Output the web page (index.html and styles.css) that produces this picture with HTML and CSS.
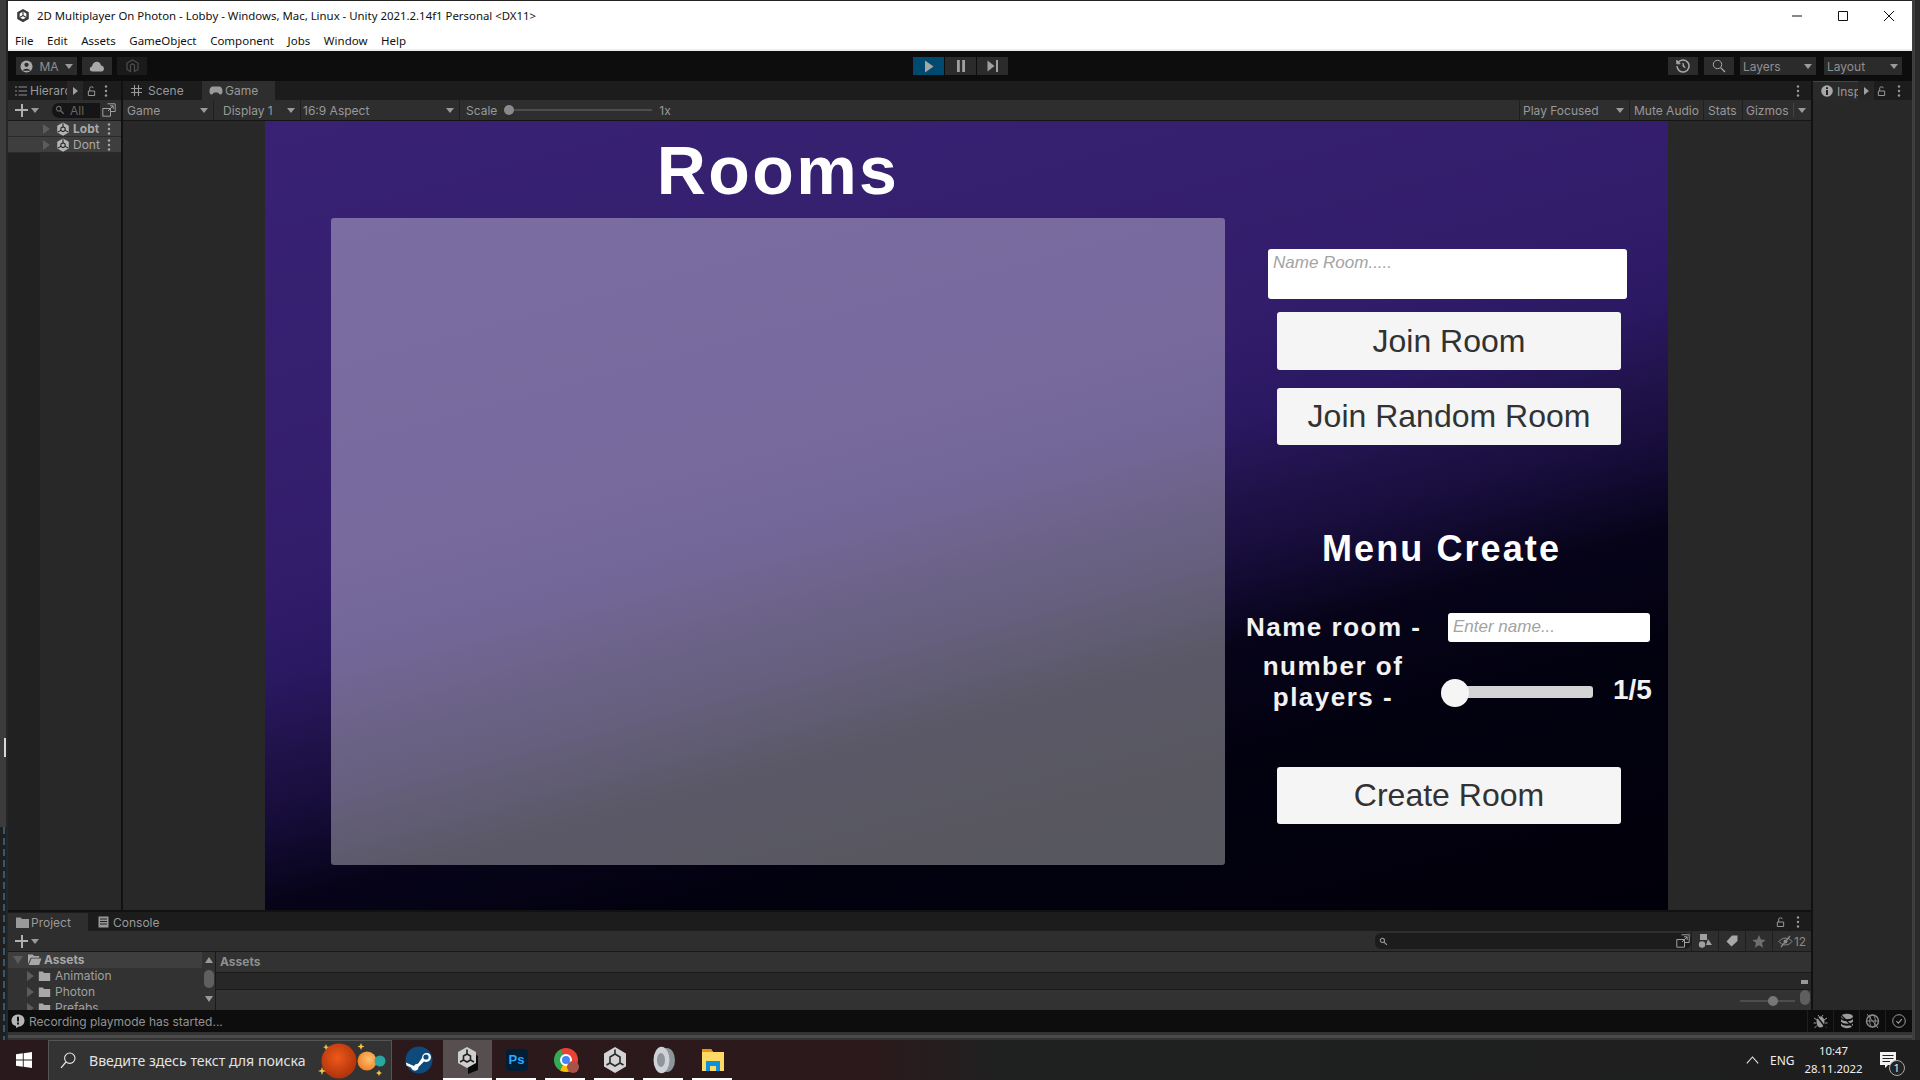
FILE: index.html
```html
<!DOCTYPE html>
<html lang="en">

<head>
  <meta charset="UTF-8">
  <title>2D Multiplayer On Photon - Lobby - Unity</title>
  <link rel="stylesheet" href="styles.css">
</head>

<body>
  <svg class="defs" width="0" height="0">
    <symbol id="i-unity" viewBox="0 0 16 16">
      <path d="M8 0.5 14.6 4.3V11.9L8 15.7 1.4 11.9V4.3Z" fill="currentColor"/>
      <path d="M8 5.4 10.4 6.8V9.6L8 11 5.6 9.6V6.8Z M8 1.4V5.4 M2 11.6 5.6 9.6 M14 11.6 10.4 9.6" fill="none" stroke="#1c1c1c" stroke-width="1.2"/>
    </symbol>
    <symbol id="i-folder" viewBox="0 0 16 14">
      <path d="M1 1.5H6L7.5 3.2H15V13H1Z" fill="currentColor"/>
    </symbol>
    <symbol id="i-folder-open" viewBox="0 0 16 14">
      <path d="M1 1.5H6L7.5 3.2H13V5H4L1 12Z M4.8 6H15.5L13 13H1.8Z" fill="currentColor"/>
    </symbol>
    <symbol id="i-lock" viewBox="0 0 10 12">
      <path d="M1.5 6H8.5V11H1.5Z M3 6V2.8C3 0.8 7 0.8 7 2.8" fill="none" stroke="currentColor" stroke-width="1.1"/>
    </symbol>
    <symbol id="i-dots" viewBox="0 0 4 12">
      <circle cx="2" cy="1.5" r="1.2" fill="currentColor"/>
      <circle cx="2" cy="6" r="1.2" fill="currentColor"/>
      <circle cx="2" cy="10.5" r="1.2" fill="currentColor"/>
    </symbol>
    <symbol id="i-link" viewBox="0 0 14 14">
      <path d="M5.5 0.8H13.2V8.5H9 M0.8 5.5H8.5V13.2H0.8Z M6 8 11 3 M8 2.8H11.2V6" fill="none" stroke="currentColor"/>
    </symbol>
    <symbol id="i-lens" viewBox="0 0 12 12">
      <circle cx="4.5" cy="4.5" r="2.8" fill="none" stroke="currentColor" stroke-width="1.4"/>
      <path d="M6.8 6.8 10.5 10.5" stroke="currentColor" stroke-width="1.6"/>
    </symbol>
  </svg>

  <div class="desktop">
    <div class="edge-left">
      <div class="edge-mark"></div>
      <div class="edge-code"></div>
    </div>

    <div class="window">
      <header class="titlebar">
        <svg class="app-icon" width="14" height="15" viewBox="0 0 16 16">
          <path d="M8 0.5 14.6 4.3V11.9L8 15.7 1.4 11.9V4.3Z" fill="#3a3a3a"/>
          <path d="M8 3.4 11.8 5.6V10.2L8 12.4 4.2 10.2V5.6Z" fill="#fff"/>
          <path d="M8 8V3.4M8 8 4.2 10.2M8 8 11.8 10.2" stroke="#3a3a3a" stroke-width="1.3"/>
        </svg>
        <span class="title-text">2D Multiplayer On Photon - Lobby - Windows, Mac, Linux - Unity 2021.2.14f1 Personal &lt;DX11&gt;</span>
        <div class="win-buttons">
          <svg width="12" height="12" viewBox="0 0 12 12"><path d="M1 6H11" stroke="#111" stroke-width="1"/></svg>
          <svg width="12" height="12" viewBox="0 0 12 12"><path d="M1.5 1.5H10.5V10.5H1.5Z" fill="none" stroke="#111"/></svg>
          <svg width="12" height="12" viewBox="0 0 12 12"><path d="M1 1 11 11M11 1 1 11" stroke="#111"/></svg>
        </div>
      </header>
      <nav class="menubar">
        <span>File</span><span>Edit</span><span>Assets</span><span>GameObject</span><span>Component</span><span>Jobs</span><span>Window</span><span>Help</span>
      </nav>

      <div class="toolbar">
        <div class="toolbar-left">
          <div class="tool-btn account">
            <svg width="13" height="13" viewBox="0 0 14 14"><circle cx="7" cy="7" r="6.5" fill="#a8a8a8"/><circle cx="7" cy="5.2" r="2.3" fill="#2b2b2b"/><path d="M2.8 11.6C4 8.6 10 8.6 11.2 11.6Z" fill="#2b2b2b"/></svg>
            <span>MA</span><i class="caret"></i>
          </div>
          <div class="tool-btn cloud">
            <svg width="16" height="11" viewBox="0 0 16 11"><path d="M3.5 10.5C0 10.5 0 6 3 5.6 3.4 2 6 0.5 8.4 0.8 10.8 1 11.8 3 12 4.6 15.8 4.8 16 10.5 12.5 10.5Z" fill="#a8a8a8"/></svg>
          </div>
          <div class="tool-btn collab">
            <svg width="13" height="15" viewBox="0 0 13 15"><path d="M6.5 1 12 4V10.5L8.5 12.5V6L6.5 4.8 4.5 6V12.5L1 10.5V4Z" fill="none" stroke="#4d4d4d" stroke-width="1.2"/></svg>
          </div>
        </div>
        <div class="play-group">
          <div class="play-btn active"><svg width="10" height="13" viewBox="0 0 10 13"><path d="M1 0.5 9.5 6.5 1 12.5Z" fill="#a6a6a6"/></svg></div>
          <div class="play-btn"><svg width="10" height="12" viewBox="0 0 10 12"><path d="M1 0H3.8V12H1ZM6.2 0H9V12H6.2Z" fill="#a0a0a0"/></svg></div>
          <div class="play-btn"><svg width="12" height="12" viewBox="0 0 12 12"><path d="M0.5 0.5 7.5 6 0.5 11.5Z M9 0H11V12H9Z" fill="#a0a0a0"/></svg></div>
        </div>
        <div class="toolbar-right">
          <div class="tool-btn square">
            <svg width="14" height="14" viewBox="0 0 14 14"><path d="M2.2 3.4A6 6 0 1 1 1 7" fill="none" stroke="#a8a8a8" stroke-width="1.5"/><path d="M0.8 1.2V4.8H4.2Z M7 3.8V7.4L9.4 8.8" fill="#a8a8a8" stroke="#a8a8a8"/></svg>
          </div>
          <div class="tool-btn square">
            <svg width="14" height="14" viewBox="0 0 14 14"><circle cx="5.5" cy="5.5" r="4.2" fill="none" stroke="#a8a8a8"/><path d="M8.6 8.6 13 13" stroke="#a8a8a8" stroke-width="1.3"/></svg>
          </div>
          <div class="tool-btn select layers"><span>Layers</span><i class="caret"></i></div>
          <div class="tool-btn select layout"><span>Layout</span><i class="caret"></i></div>
        </div>
      </div>

      <main class="docks">
        <div class="docks-left">
          <div class="docks-top">
            <section class="hierarchy">
              <div class="tabrow">
                <div class="hier-tab">
                  <svg width="12" height="10" viewBox="0 0 12 10"><path d="M3.5 1H12M3.5 5H12M3.5 9H12M0 1H2M0 5H2M0 9H2" stroke="#8f8f8f"/></svg>
                  <span>Hierarc</span>
                </div>
                <div class="tab-arrow"><i class="tri-right"></i></div>
                <svg class="tab-lock" width="9" height="12"><use href="#i-lock"/></svg>
                <svg class="tab-dots" width="4" height="12"><use href="#i-dots"/></svg>
              </div>
              <div class="hier-tools">
                <span class="plus"></span><i class="caret"></i>
                <div class="search-field">
                  <svg width="10" height="10"><use href="#i-lens"/></svg>
                  <span>All</span>
                </div>
                <div class="link-box"><svg width="14" height="14"><use href="#i-link"/></svg></div>
              </div>
              <div class="hier-row">
                <i class="tri-tree"></i>
                <svg width="14" height="14"><use href="#i-unity"/></svg>
                <b>Lobt</b>
                <svg class="row-dots" width="4" height="12"><use href="#i-dots"/></svg>
              </div>
              <div class="hier-row">
                <i class="tri-tree"></i>
                <svg width="14" height="14"><use href="#i-unity"/></svg>
                <span>Dont</span>
                <svg class="row-dots" width="4" height="12"><use href="#i-dots"/></svg>
              </div>
              <div class="hier-body"></div>
            </section>

            <section class="game-panel">
              <div class="tabrow game-tabs">
                <div class="tab scene-tab">
                  <svg width="11" height="11" viewBox="0 0 11 11"><path d="M3.5 0V11M7.5 0V11M0 3.5H11M0 7.5H11" stroke="#9a9a9a" stroke-width="1.1"/></svg>
                  <span>Scene</span>
                </div>
                <div class="tab game-tab">
                  <svg width="14" height="9" viewBox="0 0 14 9"><path d="M3.5 0.5H10.5C14 0.5 14.6 8.5 11.5 8.5 10 8.5 9.5 6.5 8.5 6.5H5.5C4.5 6.5 4 8.5 2.5 8.5-0.6 8.5 0 0.5 3.5 0.5Z" fill="#9a9a9a"/></svg>
                  <span>Game</span>
                </div>
                <svg class="game-dots" width="4" height="12"><use href="#i-dots"/></svg>
              </div>
              <div class="game-tools">
                <div class="gt gt-game"><span>Game</span><i class="caret"></i></div>
                <div class="gt gt-display"><span>Display 1</span><i class="caret"></i></div>
                <div class="gt gt-aspect"><span>16:9 Aspect</span><i class="caret"></i></div>
                <div class="gt gt-scale">
                  <span>Scale</span>
                  <div class="scale-line"><i class="scale-thumb"></i></div>
                  <span>1x</span>
                </div>
                <div class="gt gt-focus"><span>Play Focused</span><i class="caret"></i></div>
                <div class="gt gt-mute"><span>Mute Audio</span></div>
                <div class="gt gt-stats"><span>Stats</span></div>
                <div class="gt gt-gizmos"><span>Gizmos</span><i class="gizmo-sep"></i><i class="caret"></i></div>
              </div>
              <div class="game-view">
                <div class="game-canvas">
                  <div class="rooms-col">
                    <h1 class="rooms-title">Rooms</h1>
                    <div class="rooms-list"></div>
                  </div>
                  <div class="side-col">
                    <div class="input-box room-input">Name Room.....</div>
                    <div class="ui-btn join-btn">Join Room</div>
                    <div class="ui-btn random-btn">Join Random Room</div>
                    <h2 class="menu-title">Menu Create</h2>
                    <div class="form-row name-row">
                      <div class="form-label">Name room -</div>
                      <div class="input-box name-input">Enter name...</div>
                    </div>
                    <div class="form-row players-row">
                      <div class="form-label players-label">number of<br>players -</div>
                      <div class="slider"><i class="slider-thumb"></i></div>
                      <div class="slider-value">1/5</div>
                    </div>
                    <div class="ui-btn create-btn">Create Room</div>
                  </div>
                </div>
              </div>
            </section>
          </div>

          <section class="project">
            <div class="tabrow project-tabs">
              <div class="tab project-tab">
                <svg width="15" height="13"><use href="#i-folder"/></svg>
                <span>Project</span>
              </div>
              <div class="tab console-tab">
                <svg width="11" height="12" viewBox="0 0 11 12"><path d="M0.5 0.5H10.5V11.5H0.5Z" fill="#999"/><path d="M2 3H9M2 5.5H9M2 8H9" stroke="#1c1c1c"/></svg>
                <span>Console</span>
              </div>
              <svg class="project-lock" width="9" height="12"><use href="#i-lock"/></svg>
              <svg class="project-dots" width="4" height="12"><use href="#i-dots"/></svg>
            </div>
            <div class="project-tools">
              <span class="plus"></span><i class="caret"></i>
              <div class="project-search">
                <svg width="9" height="9"><use href="#i-lens"/></svg>
                <div class="link-box"><svg width="14" height="14"><use href="#i-link"/></svg></div>
              </div>
              <div class="pt-icon">
                <svg width="14" height="14" viewBox="0 0 14 14"><path d="M2 0H9V6H2Z" fill="#a0a0a0"/><circle cx="4" cy="10.5" r="3.2" fill="#a0a0a0"/><path d="M10 5 14 11H8Z" fill="#a0a0a0"/></svg>
              </div>
              <div class="pt-icon">
                <svg width="12" height="12" viewBox="0 0 12 12"><path d="M6 0.5H11.5V6L5.5 11.5 0.5 6.5Z" fill="#a8a8a8"/></svg>
              </div>
              <div class="pt-icon">
                <svg width="14" height="13" viewBox="0 0 14 13"><path d="M7 0 8.9 4.5 13.6 4.9 10 8 11.1 12.8 7 10.2 2.9 12.8 4 8 0.4 4.9 5.1 4.5Z" fill="#6f6f6f"/></svg>
              </div>
              <div class="pt-count">
                <svg width="15" height="13" viewBox="0 0 15 13"><path d="M1 6.5C4 2 11 2 14 6.5 11 11 4 11 1 6.5Z" fill="none" stroke="#8a8a8a"/><circle cx="7.5" cy="6.5" r="2" fill="#8a8a8a"/><path d="M3 12 12 1" stroke="#8a8a8a" stroke-width="1.2"/></svg>
                <span>12</span>
              </div>
            </div>
            <div class="project-body">
              <div class="tree">
                <div class="tree-list">
                  <div class="tree-root">
                    <i class="tri-open"></i>
                    <svg width="15" height="13"><use href="#i-folder-open"/></svg>
                    <b>Assets</b>
                  </div>
                  <div class="tree-item"><i class="tri-tree"></i><svg width="13" height="12"><use href="#i-folder"/></svg><span>Animation</span></div>
                  <div class="tree-item"><i class="tri-tree"></i><svg width="13" height="12"><use href="#i-folder"/></svg><span>Photon</span></div>
                  <div class="tree-item"><i class="tri-tree"></i><svg width="13" height="12"><use href="#i-folder"/></svg><span>Prefabs</span></div>
                </div>
                <div class="tree-scroll">
                  <i class="scroll-up"></i>
                  <i class="scroll-thumb"></i>
                  <i class="scroll-down"></i>
                </div>
              </div>
              <div class="files">
                <div class="crumbs"><b>Assets</b></div>
                <div class="files-list"><i class="files-pin"></i></div>
                <div class="files-foot">
                  <div class="zoom-line"><i class="zoom-thumb"></i></div>
                  <i class="files-knob"></i>
                </div>
              </div>
            </div>
          </section>
        </div>

        <aside class="inspector">
          <div class="tabrow">
            <div class="insp-tab">
              <svg width="12" height="12" viewBox="0 0 12 12"><circle cx="6" cy="6" r="5.8" fill="#a8a8a8"/><path d="M5 2.2H7V4H5ZM5 5H7V10H5Z" fill="#222"/></svg>
              <span>Insp</span>
            </div>
            <div class="tab-arrow"><i class="tri-right"></i></div>
            <svg class="tab-lock" width="9" height="12"><use href="#i-lock"/></svg>
            <svg class="tab-dots" width="4" height="12"><use href="#i-dots"/></svg>
          </div>
        </aside>
      </main>

      <footer class="statusbar">
        <svg width="14" height="14" viewBox="0 0 14 14"><path d="M7 0.5C11 0.5 13.5 3 13.5 6.5S11 12.5 8 12.5L5 14V12C2 11.5 0.5 9.5 0.5 6.5S3 0.5 7 0.5Z" fill="#b5b5b5"/><path d="M6 2.8H8V7.6H6ZM6 8.6H8V10.4H6Z" fill="#111"/></svg>
        <span class="status-text">Recording playmode has started...</span>
        <div class="status-icons">
          <div class="status-icon">
            <svg width="15" height="16" viewBox="0 0 15 16"><ellipse cx="7.5" cy="9" rx="4" ry="5.5" fill="#9c9c9c"/><path d="M1 5 4 7M14 5 11 7M0.5 10H3M14.5 10H12M1.5 15 4 12.5M13.5 15 11 12.5M5 2 6.5 4M10 2 8.5 4" stroke="#9c9c9c"/><path d="M2 1 13 15" stroke="#0d0d0d" stroke-width="1.4"/></svg>
          </div>
          <div class="status-icon">
            <svg width="14" height="16" viewBox="0 0 14 16"><ellipse cx="7" cy="3.5" rx="6" ry="2.8" fill="#9c9c9c"/><path d="M1 6C3 9 11 9 13 6V8.5C11 11.5 3 11.5 1 8.5ZM1 10.6C3 13.6 11 13.6 13 10.6V12.8C11 16 3 16 1 12.8Z" fill="#9c9c9c"/><path d="M1 2 13 14" stroke="#0d0d0d" stroke-width="1.2"/></svg>
          </div>
          <div class="status-icon">
            <svg width="15" height="16" viewBox="0 0 15 16"><circle cx="7.5" cy="8" r="6" fill="none" stroke="#8c8c8c" stroke-width="1.4"/><ellipse cx="7.5" cy="8" rx="2.8" ry="6" fill="none" stroke="#8c8c8c"/><path d="M1.5 8H13.5M2 1 13 15" stroke="#8c8c8c"/></svg>
          </div>
          <div class="status-icon">
            <svg width="14" height="14" viewBox="0 0 14 14"><circle cx="7" cy="7" r="6.3" fill="none" stroke="#9c9c9c"/><path d="M4.4 7.2 6.4 9.2 9.8 5.2" fill="none" stroke="#9c9c9c" stroke-width="1.2"/></svg>
          </div>
        </div>
      </footer>
      <div class="window-foot"></div>
    </div>

    <div class="edge-right"></div>
  </div>

  <div class="taskbar">
    <div class="start">
      <svg width="16" height="16" viewBox="0 0 16 16"><path d="M0 2.3 6.8 1.3V7.6H0ZM7.7 1.2 16 0V7.6H7.7ZM0 8.4H6.8V14.7L0 13.7ZM7.7 8.4H16V16L7.7 14.8Z" fill="#fff"/></svg>
    </div>
    <div class="task-search">
      <svg class="glass" width="16" height="17" viewBox="0 0 16 17"><circle cx="9.8" cy="6.2" r="5.2" fill="none" stroke="#e8e8e8" stroke-width="1.1"/><path d="M6 10 1 15.8" stroke="#e8e8e8" stroke-width="1.2"/></svg>
      <span class="search-text">Введите здесь текст для поиска</span>
      <svg class="planets" width="74" height="40" viewBox="0 0 74 40">
        <defs>
          <radialGradient id="p1" cx="0.45" cy="0.4" r="0.65"><stop offset="0" stop-color="#f0581a"/><stop offset="1" stop-color="#a8300a"/></radialGradient>
          <radialGradient id="p2" cx="0.6" cy="0.4" r="0.7"><stop offset="0" stop-color="#ffc070"/><stop offset="1" stop-color="#ee7b1e"/></radialGradient>
        </defs>
        <g transform="translate(6 0)">
          <circle cx="20" cy="20" r="17.5" fill="url(#p1)"/>
          <circle cx="48" cy="20" r="9.5" fill="url(#p2)"/>
          <circle cx="61" cy="20" r="5.5" fill="#2ba6a0"/>
          <path d="M7 3 8 5.4 10 6 8 7 7 9 6 7 4 6 6 5.4ZM42 2 43 4.4 45.5 5.5 43 6.6 42 9 41 6.6 38.5 5.5 41 4.4ZM3 26 4 29 7 30 4 31 3 34 2 31-1 30 2 29ZM60 29 61 31 63 32 61 33 60 35 59 33 57 32 59 31Z" fill="#f5c542"/>
        </g>
      </svg>
    </div>
    <div class="task-tile">
      <svg width="28" height="28" viewBox="0 0 28 28"><circle cx="14" cy="14" r="13.5" fill="#0f4a7c"/><path d="M0.8 16.5 9 20C10 18.4 11.5 17.6 13 17.8L17 12C17 8.5 20 6.5 22.5 7 25.5 7.6 26.5 10.5 25.6 13 24.6 15.5 21.5 16.5 19 15.5L13.5 21C13.6 24 10.5 25.6 8 24 6.8 23.3 6.6 22.5 6 21.5L1.5 19.5Z" fill="#fff"/><circle cx="21" cy="11" r="2.6" fill="#0f4a7c"/></svg>
    </div>
    <div class="task-tile on">
      <svg width="26" height="28" viewBox="0 0 26 28"><path d="M13 4 23 10V24L13 28Z" fill="#0a0a0a"/><path d="M12 1 21 6V17L12 22 3 17V6Z" fill="#cfcfcf"/><path d="M12 8 15.5 10V14L12 16 8.5 14V10Z M12 3.5V8M5 16 8.5 14M19 16 15.5 14" fill="none" stroke="#222" stroke-width="1.6"/></svg>
      <i class="run-mark wide"></i>
    </div>
    <div class="task-tile">
      <div class="ps-icon">Ps</div>
      <i class="run-mark"></i>
    </div>
    <div class="task-tile">
      <div class="chrome-icon"><i></i><i class="chrome-avatar"></i></div>
      <i class="run-mark"></i>
    </div>
    <div class="task-tile">
      <svg width="24" height="28" viewBox="0 0 24 28"><path d="M12 1 23 7.5V20.5L12 27 1 20.5V7.5Z" fill="#d4d4d4"/><path d="M12 8 17 11V17L12 20 7 17V11Z M12 3.5V8M3.5 19 7 17M20.5 19 17 17" fill="none" stroke="#2b2b2b" stroke-width="1.6"/></svg>
      <i class="run-mark"></i>
    </div>
    <div class="task-tile">
      <svg width="24" height="28" viewBox="0 0 24 28"><ellipse cx="15" cy="14" rx="8" ry="12" fill="#8d949a"/><ellipse cx="9.5" cy="14" rx="8" ry="13.2" fill="#cdd2d6"/><ellipse cx="9" cy="14" rx="4" ry="7" fill="#8e959b"/></svg>
      <i class="run-mark"></i>
    </div>
    <div class="task-tile">
      <svg width="24" height="24" viewBox="0 0 24 24"><path d="M1 1H10L12 4H23V23H1Z" fill="#ffd966"/><path d="M1 1H10L12 4H1Z" fill="#e8960c"/><path d="M5 13H19V23H15V18H9V23H5Z" fill="#0a92dc"/></svg>
      <i class="run-mark"></i>
    </div>
    <div class="tray">
      <svg width="13" height="8" viewBox="0 0 13 8"><path d="M0.8 7.3 6.5 1 12.2 7.3" fill="none" stroke="#e8e8e8" stroke-width="1.1"/></svg>
      <span class="lang">ENG</span>
      <div class="clock"><span>10:47</span><span>28.11.2022</span></div>
      <div class="notify">
        <svg width="18" height="19" viewBox="0 0 18 19"><path d="M1 1H17V14H9L6 17V14H1Z" fill="#f2f2f2"/><path d="M3.5 4.5H14.5M3.5 7.5H14.5M3.5 10.5H11" stroke="#222"/></svg>
        <span class="notify-badge">1</span>
      </div>
    </div>
  </div>
</body>

</html>
```

FILE: styles.css
```css
* {
  box-sizing: border-box;
}

html,
body {
  margin: 0;
  height: 1080px;
  overflow: hidden;
  background-color: #1c1c1c;
}

body {
  font-family: Inter, "Noto Sans", sans-serif;
  font-size: 12px;
  color: #999;
}

i {
  display: block;
}

svg {
  display: block;
  flex: none;
}

.defs {
  position: absolute;
}

.desktop {
  display: flex;
  height: 1040px;
}

/* screen edges around the editor */
.edge-left {
  width: 8px;
  display: flex;
  flex-direction: column;
  background-color: #3c3c3c;
  border-right: 2px solid #262626;
}

.edge-mark {
  width: 2px;
  height: 19px;
  margin: 738px 0 70px 4px;
  background-color: #d8d8d8;
}

.edge-code {
  flex: 1;
  background-color: #1f1f1f;
  background-image: repeating-linear-gradient(to bottom, #35586e 0, #35586e 7px, transparent 7px, transparent 11px);
  background-size: 2px 100%;
  background-position: 3px 0;
  background-repeat: no-repeat;
}

.edge-right {
  width: 8px;
  background-color: #3f3f3f;
  border-right: 5px solid #2b2b2b;
}

.window {
  width: 1904px;
  display: flex;
  flex-direction: column;
  background-color: #111;
}

/* title and menu */
.titlebar {
  height: 26px;
  display: flex;
  align-items: center;
  padding: 4px 0 0 8px;
  background-color: #fff;
  border-top: 1px solid #222;
  color: #111;
  font-family: "Noto Sans", sans-serif;
  font-size: 11.4px;
}

.app-icon {
  margin-right: 7px;
}

.win-buttons {
  margin-left: auto;
  display: flex;
  gap: 34px;
  padding-right: 17px;
}

.menubar {
  height: 25px;
  display: flex;
  align-items: center;
  gap: 13.6px;
  padding: 6px 0 0 7px;
  background-color: #fff;
  border-bottom: 2px solid #eee;
  color: #111;
  font-family: "Noto Sans", sans-serif;
  font-size: 11.5px;
}

/* main toolbar */
.toolbar {
  height: 30px;
  display: flex;
  align-items: center;
  padding: 0 10px 0 8px;
  background-color: #0d0d0d;
}

.toolbar-left {
  width: 897px;
  display: flex;
  gap: 5px;
}

.toolbar-right {
  margin-left: auto;
  display: flex;
  gap: 6px;
}

.tool-btn {
  height: 18px;
  display: flex;
  align-items: center;
  justify-content: center;
  background-color: #2b2b2b;
  color: #8f8f8f;
}

.account {
  width: 61px;
  gap: 6px;
}

.cloud {
  width: 30px;
}

.collab {
  width: 30px;
  background-color: #1a1a1a;
}

.square {
  width: 30px;
}

.select {
  justify-content: space-between;
  padding: 0 4px 0 3px;
}

.layers {
  width: 76px;
  margin-right: 2px;
}

.layout {
  width: 78px;
}

.play-group {
  display: flex;
  gap: 1px;
}

.play-btn {
  width: 31px;
  height: 18px;
  display: flex;
  align-items: center;
  justify-content: center;
  background-color: #2b2b2b;
}

.play-btn.active {
  background-color: #004a70;
}

.caret {
  width: 0;
  height: 0;
  border-left: 4px solid transparent;
  border-right: 4px solid transparent;
  border-top: 5px solid #9a9a9a;
}

/* docks */
.docks {
  height: 929px;
  display: flex;
  gap: 2px;
}

.docks-left {
  width: 1803px;
  display: flex;
  flex-direction: column;
  gap: 2px;
}

.docks-top {
  height: 829px;
  display: flex;
  gap: 2px;
}

.tabrow {
  height: 19px;
  display: flex;
  align-items: center;
  background-color: #1c1c1c;
}

.tab {
  height: 19px;
  display: flex;
  align-items: center;
}

.tab-arrow {
  width: 16px;
  height: 19px;
  display: flex;
  align-items: center;
  justify-content: center;
  background-color: #262626;
}

.tri-right {
  border-left: 5px solid #a0a0a0;
  border-top: 4px solid transparent;
  border-bottom: 4px solid transparent;
}

.tri-tree {
  border-left: 7px solid #5c5c5c;
  border-top: 5px solid transparent;
  border-bottom: 5px solid transparent;
}

.tri-open {
  border-top: 8px solid #5c5c5c;
  border-left: 5px solid transparent;
  border-right: 5px solid transparent;
}

.tab-lock {
  margin-left: 3px;
}

.tab-dots {
  margin-left: 11px;
}

/* hierarchy */
.hierarchy {
  width: 113px;
  display: flex;
  flex-direction: column;
  background-color: #282828;
}

.hier-tab {
  width: 59px;
  height: 19px;
  display: flex;
  align-items: center;
  gap: 3px;
  padding-left: 7px;
  overflow: hidden;
  white-space: nowrap;
  flex: none;
}

.hierarchy .tab-lock {
  margin-left: 4px;
}

.hierarchy .tab-dots {
  margin-left: 8px;
}

.hier-tools {
  height: 21px;
  display: flex;
  align-items: center;
  padding-left: 7px;
  background-color: #2e2e2e;
  border-bottom: 1px solid #1a1a1a;
}

.plus {
  width: 13px;
  height: 13px;
  margin-right: 3px;
  background: linear-gradient(#b0b0b0, #b0b0b0) center / 13px 2px no-repeat,
    linear-gradient(#b0b0b0, #b0b0b0) center / 2px 13px no-repeat;
}

.search-field {
  width: 48px;
  height: 15px;
  margin-left: 13px;
  display: flex;
  align-items: center;
  gap: 5px;
  padding-left: 3px;
  border-radius: 7px 0 0 7px;
  background-color: #151515;
  color: #666;
}

.link-box {
  width: 17px;
  height: 15px;
  display: flex;
  align-items: center;
  justify-content: center;
  color: #a0a0a0;
}

.hier-row {
  height: 16px;
  display: flex;
  align-items: center;
  padding-left: 35px;
  background-color: #3e3e3e;
  border-bottom: 1px solid #2a2a2a;
  color: #a8a8a8;
}

.hier-row svg:not(.row-dots) {
  margin-left: 6px;
  color: #b5b5b5;
}

.hier-row b,
.hier-row span {
  width: 28px;
  margin-left: 3px;
  overflow: hidden;
  white-space: nowrap;
}

.row-dots {
  margin-left: 6px;
}

.hier-body {
  flex: 1;
  background: linear-gradient(to right, #212121 32px, #282828 32px);
}

/* game panel */
.game-panel {
  width: 1688px;
  display: flex;
  flex-direction: column;
}

.scene-tab {
  width: 79px;
  gap: 6px;
  padding-left: 8px;
}

.game-tab {
  width: 73px;
  gap: 2px;
  padding-left: 7px;
  background-color: #2e2e2e;
}

.game-dots {
  margin-left: auto;
  margin-right: 11px;
}

.game-tools {
  height: 21px;
  display: flex;
  background-color: #2e2e2e;
  border-bottom: 1px solid #151515;
}

.gt {
  display: flex;
  align-items: center;
  justify-content: space-between;
  padding: 0 5px 0 4px;
  border-right: 1px solid #1f1f1f;
  white-space: nowrap;
}

.gt-game {
  width: 91px;
}

.gt-display {
  width: 87px;
  padding-left: 9px;
}

.gt-aspect {
  width: 159px;
  padding-left: 2px;
}

.gt-scale {
  width: 1060px;
  justify-content: flex-start;
  padding-left: 6px;
  border-right: 1px solid #1f1f1f;
}

.scale-line {
  position: relative;
  width: 148px;
  height: 2px;
  margin: 0 7px 0 7px;
  background-color: #4d4d4d;
}

.scale-thumb {
  position: absolute;
  left: 0;
  top: -4px;
  width: 10px;
  height: 10px;
  border-radius: 50%;
  background-color: #8a8a8a;
}

.gt-focus {
  width: 110px;
  padding-left: 3px;
}

.gt-mute {
  width: 74px;
}

.gt-stats {
  width: 39px;
}

.gt-gizmos {
  width: 68px;
  padding-left: 3px;
  border-right: none;
}

.gizmo-sep {
  width: 1px;
  height: 14px;
  background-color: #444;
  margin-left: 1px;
}

.game-view {
  flex: 1;
  padding: 0 143px 0 142px;
  background-color: #282828;
}

/* the running game */
.game-canvas {
  height: 789px;
  display: flex;
  background: linear-gradient(165deg, #392274 0%, #321d6b 39%, #2a1862 48%, #1f1248 55%, #170d3a 60%, #07041a 67%, #02010f 77%, #01000a 100%);
  font-family: "Liberation Sans", Arial, sans-serif;
}

.rooms-col {
  width: 960px;
  padding-left: 66px;
}

.rooms-title {
  height: 97px;
  margin: 0;
  width: 894px;
  text-align: center;
  font-size: 68px;
  line-height: 98px;
  letter-spacing: 2.4px;
  font-weight: bold;
  color: #fff;
}

.rooms-list {
  width: 894px;
  height: 647px;
  border-radius: 3px;
  background-color: rgba(255, 255, 255, 0.34);
}

.side-col {
  width: 443px;
  display: flex;
  flex-direction: column;
}

.input-box {
  background-color: #fff;
  border-radius: 3px;
  color: #a3a3a3;
  font-style: italic;
  font-size: 17px;
}

.room-input {
  width: 359px;
  height: 50px;
  margin: 128px 0 0 43px;
  padding: 4px 5px;
}

.ui-btn {
  width: 344px;
  margin-left: 52px;
  border-radius: 3px;
  display: flex;
  align-items: center;
  justify-content: center;
  background-color: #f5f5f5;
  color: #323232;
  font-size: 32px;
}

.join-btn {
  height: 58px;
  margin-top: 13px;
}

.random-btn {
  height: 57px;
  margin-top: 18px;
}

.menu-title {
  height: 40px;
  margin: 84px 0 0;
  padding-right: 10px;
  text-align: center;
  font-size: 36px;
  line-height: 40px;
  letter-spacing: 2.1px;
  font-weight: bold;
  color: #fff;
}

.form-row {
  display: flex;
  padding-left: 21px;
}

.form-label {
  width: 202px;
  font-size: 26px;
  font-weight: bold;
  letter-spacing: 1.5px;
  color: #f2f2f2;
  white-space: nowrap;
}

.name-row {
  height: 29px;
  margin-top: 44px;
  align-items: center;
}

.name-input {
  width: 202px;
  height: 29px;
  padding: 4px 5px 0;
}

.players-row {
  height: 62px;
  margin-top: 9px;
}

.players-label {
  width: 174px;
  margin-right: 33px;
  text-align: center;
  line-height: 31px;
}

.slider {
  position: relative;
  width: 140px;
  height: 12px;
  margin-top: 35px;
  border-radius: 3px;
  background-color: #d4d4d4;
}

.slider-thumb {
  position: absolute;
  left: -12px;
  top: -7px;
  width: 28px;
  height: 28px;
  border-radius: 50%;
  background-color: #f5f5f5;
}

.slider-value {
  margin: 23px 0 0 20px;
  font-size: 28px;
  font-weight: bold;
  line-height: 32px;
  color: #f2f2f2;
}

.create-btn {
  height: 57px;
  margin-top: 54px;
}

/* project window */
.project {
  height: 98px;
  display: flex;
  flex-direction: column;
  overflow: hidden;
}

.project-tabs {
  padding-top: 1px;
}

.project-tab {
  width: 80px;
  gap: 1px;
  padding-left: 7px;
  background-color: #2e2e2e;
}

.console-tab {
  width: 80px;
  gap: 4px;
  padding-left: 10px;
}

.project-lock {
  margin-left: auto;
}

.project-dots {
  margin: 0 11px 0 11px;
}

.project-tools {
  height: 21px;
  display: flex;
  align-items: center;
  padding-left: 7px;
  background-color: #2e2e2e;
  border-bottom: 1px solid #1a1a1a;
}

.project-search {
  width: 316px;
  height: 16px;
  margin-left: auto;
  display: flex;
  align-items: center;
  justify-content: space-between;
  padding-left: 4px;
  border-radius: 6px;
  background-color: #1c1c1c;
  color: #999;
}

.pt-icon {
  width: 27px;
  height: 20px;
  display: flex;
  align-items: center;
  justify-content: center;
  border-left: 1px solid #1f1f1f;
}

.pt-icon:first-of-type {
  margin-left: 3px;
}

.pt-count {
  width: 39px;
  height: 20px;
  display: flex;
  align-items: center;
  justify-content: center;
  gap: 1px;
  border-left: 1px solid #1f1f1f;
  color: #8a8a8a;
}

.project-body {
  flex: 1;
  display: flex;
  overflow: hidden;
}

.tree {
  width: 208px;
  display: flex;
  border-right: 1px solid #1a1a1a;
  background-color: #323232;
}

.tree-list {
  width: 195px;
  overflow: hidden;
}

.tree-root {
  height: 16px;
  display: flex;
  align-items: center;
  padding: 0 0 1px 5px;
  background-color: #3e3e3e;
  color: #a8a8a8;
}

.tree-root svg {
  margin-left: 4px;
  color: #a8a8a8;
}

.tree-root b {
  margin-left: 2px;
}

.tree-item {
  height: 16px;
  display: flex;
  align-items: center;
  padding: 0 0 1px 19px;
  color: #a0a0a0;
}

.tree-item svg {
  margin: 0 4px 0 4px;
  color: #a8a8a8;
}

.tree-scroll {
  width: 13px;
  display: flex;
  flex-direction: column;
  align-items: center;
  padding-top: 5px;
}

.scroll-up {
  border-bottom: 6px solid #9a9a9a;
  border-left: 4px solid transparent;
  border-right: 4px solid transparent;
}

.scroll-thumb {
  width: 10px;
  height: 18px;
  margin: 7px 0 8px;
  border-radius: 5px;
  background-color: #5f5f5f;
}

.scroll-down {
  border-top: 6px solid #9a9a9a;
  border-left: 4px solid transparent;
  border-right: 4px solid transparent;
}

.files {
  flex: 1;
  display: flex;
  flex-direction: column;
}

.crumbs {
  height: 21px;
  padding: 2px 4px;
  background-color: #323232;
  border-bottom: 1px solid #1a1a1a;
  color: #8f8f8f;
}

.files-list {
  height: 17px;
  display: flex;
  justify-content: flex-end;
  background-color: #272727;
  border-bottom: 1px solid #1a1a1a;
}

.files-pin {
  width: 7px;
  height: 4px;
  margin: 7px 3px 0 0;
  background-color: #999;
}

.files-foot {
  flex: 1;
  display: flex;
  justify-content: flex-end;
  background-color: #323232;
}

.zoom-line {
  position: relative;
  width: 55px;
  height: 2px;
  margin: 10px 5px 0 0;
  background-color: #4d4d4d;
}

.zoom-thumb {
  position: absolute;
  left: 28px;
  top: -4px;
  width: 10px;
  height: 10px;
  border-radius: 50%;
  background-color: #777;
}

.files-knob {
  width: 10px;
  height: 15px;
  margin-right: 1px;
  border-radius: 5px;
  background-color: #5f5f5f;
}

/* inspector */
.inspector {
  width: 99px;
  background-color: #282828;
}

.insp-tab {
  width: 45px;
  height: 19px;
  display: flex;
  align-items: center;
  gap: 4px;
  padding-left: 8px;
  overflow: hidden;
  flex: none;
  background-color: #2a2a2a;
  border-top: 1px solid #005a8c;
}

.inspector .tab-lock {
  margin-left: 3px;
}

.inspector .tab-dots {
  margin-left: 11px;
}

/* status */
.statusbar {
  height: 22px;
  display: flex;
  align-items: center;
  gap: 4px;
  padding-left: 3px;
  background-color: #0d0d0d;
  color: #939393;
}

.status-icons {
  margin-left: auto;
  display: flex;
  padding-right: 1px;
}

.status-icon {
  width: 26px;
  height: 22px;
  display: flex;
  align-items: center;
  justify-content: center;
  border-left: 1px solid #1f1f1f;
}

.window-foot {
  flex: 1;
  background: linear-gradient(#333 0, #333 3px, #4a4a4a 3px, #4a4a4a 6px, #333 6px);
}

/* windows taskbar */
.taskbar {
  height: 40px;
  display: flex;
  align-items: center;
  background: linear-gradient(to right, #2a191c 0, #2c191c 860px, #1f2020 1000px, #1e1e1e 100%);
  color: #eee;
  font-family: "Noto Sans", sans-serif;
}

.start {
  width: 48px;
  display: flex;
  justify-content: center;
}

.task-search {
  width: 344px;
  height: 40px;
  margin-right: 2px;
  display: flex;
  align-items: center;
  padding: 0 4px 0 11px;
  background-color: #333;
  border: 1px solid #555;
  border-bottom: none;
}

.search-text {
  margin-left: 13px;
  padding-bottom: 1px;
  font-size: 14.1px;
  color: #e2e2e2;
  white-space: nowrap;
}

.planets {
  margin-left: auto;
}

.task-tile {
  position: relative;
  width: 49px;
  height: 40px;
  display: flex;
  align-items: center;
  justify-content: center;
  flex: none;
}

.task-tile.on {
  background-color: #564e4f;
}

.run-mark {
  position: absolute;
  left: 4px;
  bottom: 0;
  width: 40px;
  height: 2px;
  background-color: #fff;
}

.run-mark.wide {
  left: 0;
  width: 49px;
}

.ps-icon {
  width: 22px;
  height: 22px;
  border-radius: 4px;
  background-color: #001e36;
  color: #31a8ff;
  font-family: "Liberation Sans", sans-serif;
  font-size: 13px;
  font-weight: bold;
  line-height: 22px;
  text-align: center;
}

.chrome-icon {
  position: relative;
  width: 24px;
  height: 24px;
  display: flex;
  align-items: center;
  justify-content: center;
  border-radius: 50%;
  background: conic-gradient(#ea4335 0 120deg, #fbbc04 120deg 210deg, #34a853 210deg 330deg, #ea4335 330deg);
}

.chrome-icon i {
  width: 12px;
  height: 12px;
  border-radius: 50%;
  border: 2px solid #fff;
  background-color: #4285f4;
}

.chrome-icon .chrome-avatar {
  position: absolute;
  right: -1px;
  bottom: -1px;
  border: none;
  background-color: #a8524a;
}

.tray {
  margin-left: auto;
  width: 174px;
  display: flex;
  align-items: center;
  font-size: 12px;
}

.lang {
  margin-left: 11px;
}

.clock {
  width: 60px;
  margin-left: 9px;
  display: flex;
  flex-direction: column;
  align-items: center;
  font-size: 11.4px;
  line-height: 18px;
}

.notify {
  position: relative;
  margin-left: 15px;
}

.notify-badge {
  position: absolute;
  right: -8px;
  bottom: -6px;
  width: 16px;
  height: 16px;
  border-radius: 50%;
  border: 1px solid #aaa;
  background-color: #222;
  font-size: 11px;
  line-height: 14px;
  text-align: center;
}
```
